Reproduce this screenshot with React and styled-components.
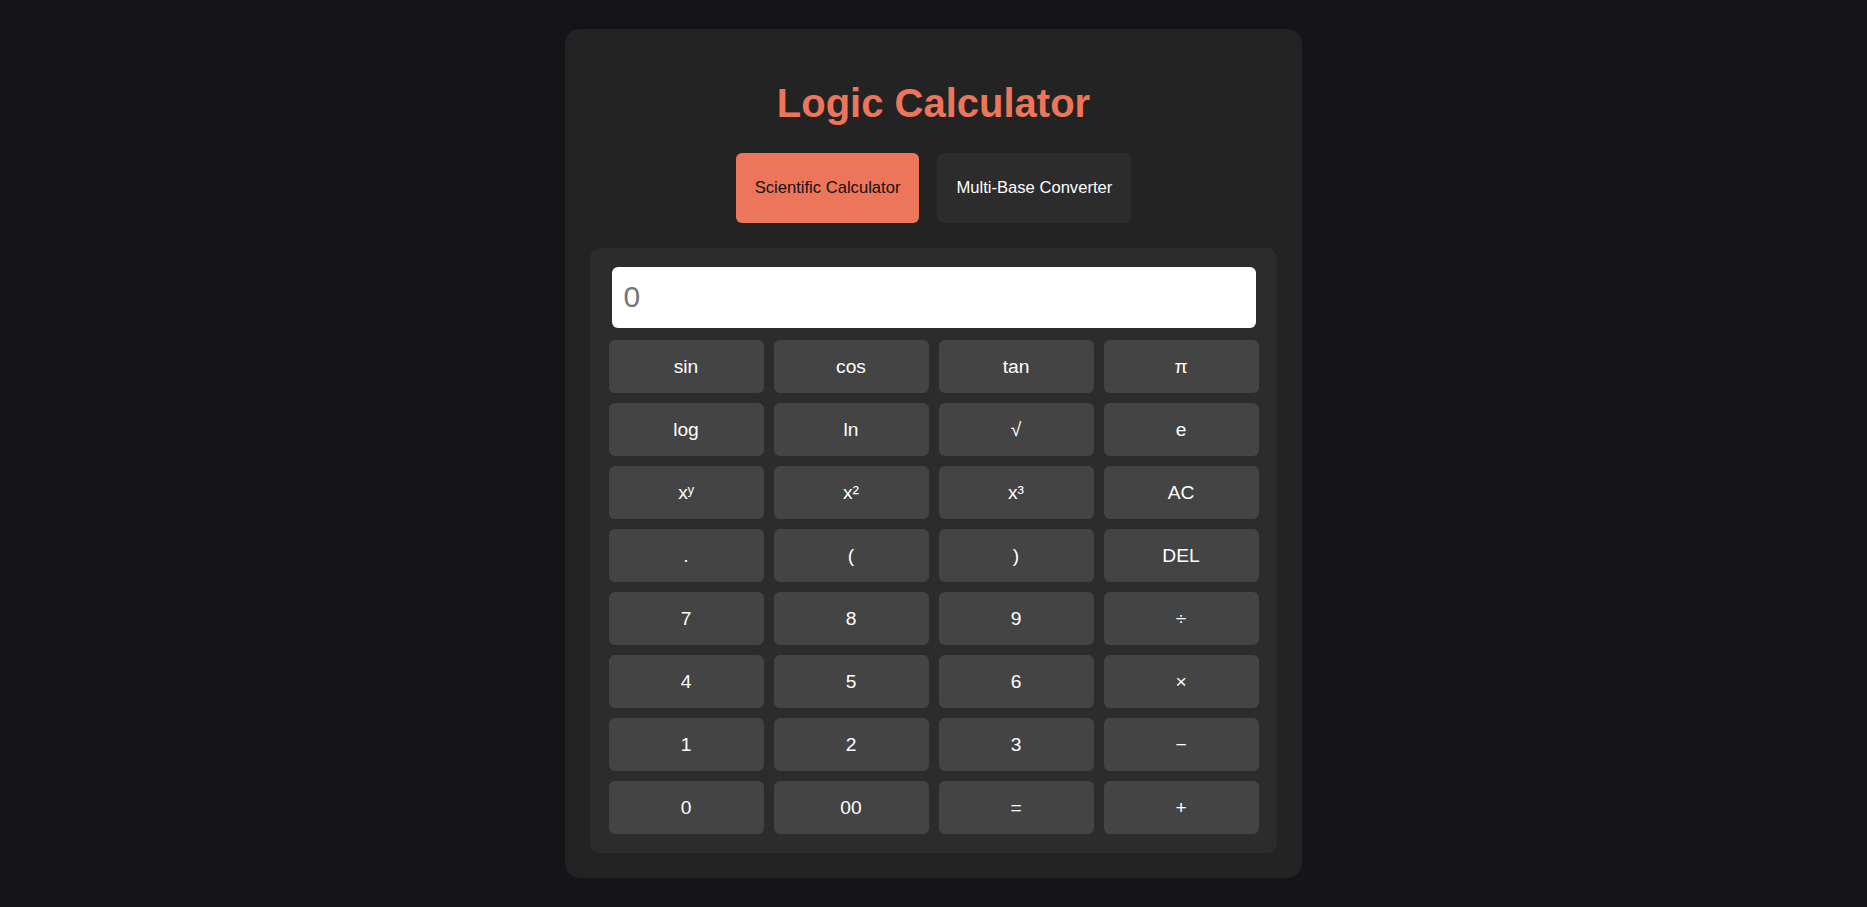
import React from 'react';
import styled, { createGlobalStyle } from 'styled-components';

const GlobalStyle = createGlobalStyle`
  * {
    box-sizing: border-box;
  }
  body {
    margin: 0;
    background: #151519;
    font-family: "Liberation Sans", Arial, sans-serif;
  }
`;

const Page = styled.div`
  min-height: 100vh;
  display: flex;
  align-items: center;
  justify-content: center;
`;

const Card = styled.div`
  width: 737px;
  padding: 25px;
  background: #232323;
  border-radius: 15px;
  display: flex;
  flex-direction: column;
  align-items: center;
`;

const Title = styled.h1`
  margin: 26.8px 0;
  font-size: 40px;
  font-weight: 700;
  color: #ed765a;
  text-align: center;
`;

const Tabs = styled.div`
  display: flex;
  justify-content: center;
  gap: 18px;
  margin-bottom: 25.6px;
`;

const Tab = styled.button`
  border: none;
  border-radius: 6px;
  padding: 25px 19px;
  font-family: inherit;
  font-size: 16.6px;
  cursor: pointer;
  background: ${(p) => (p.$active ? '#ed765a' : '#2c2c2c')};
  color: ${(p) => (p.$active ? '#111111' : '#ffffff')};
`;

const Panel = styled.div`
  width: 100%;
  padding: 18.5px;
  background: #2c2c2c;
  border-radius: 10px;
`;

const Display = styled.input`
  display: block;
  width: calc(100% - 6px);
  height: 61px;
  margin: 0 3px 12.3px;
  padding: 0 12px;
  border: none;
  border-radius: 6px;
  background: #ffffff;
  font-family: inherit;
  font-size: 30px;
  color: #222;
  outline: none;
  &::placeholder {
    color: #757575;
  }
`;

const Keys = styled.div`
  display: grid;
  grid-template-columns: repeat(4, 1fr);
  grid-auto-rows: 53px;
  gap: 10px;
`;

const Key = styled.button`
  border: none;
  border-radius: 6px;
  background: #444444;
  color: #ffffff;
  font-family: inherit;
  font-size: 19.2px;
  cursor: pointer;
`;

const keys = [
  'sin', 'cos', 'tan', 'π',
  'log', 'ln', '√', 'e',
  'xʸ', 'x²', 'x³', 'AC',
  '.', '(', ')', 'DEL',
  '7', '8', '9', '÷',
  '4', '5', '6', '×',
  '1', '2', '3', '−',
  '0', '00', '=', '+',
];

export default function App() {
  return (
    <>
      <GlobalStyle />
      <Page>
        <Card>
          <Title>Logic Calculator</Title>
          <Tabs>
            <Tab $active>Scientific Calculator</Tab>
            <Tab>Multi-Base Converter</Tab>
          </Tabs>
          <Panel>
            <Display readOnly placeholder="0" />
            <Keys>
              {keys.map((k) => (
                <Key key={k}>{k}</Key>
              ))}
            </Keys>
          </Panel>
        </Card>
      </Page>
    </>
  );
}
